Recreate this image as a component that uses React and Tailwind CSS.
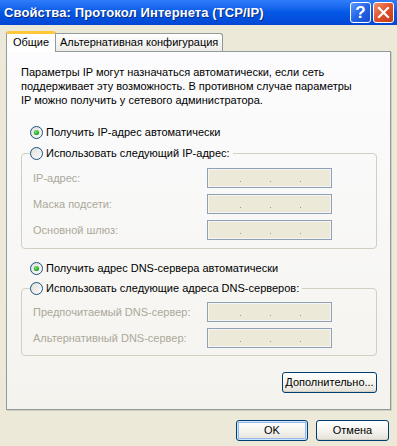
import React from 'react';

const font = { fontFamily: '"Liberation Sans", Arial, sans-serif' };

function Radio({ checked }) {
  return (
    <svg width="13" height="13" viewBox="0 0 13 13" className="shrink-0">
      <defs>
        <linearGradient id="rbg" x1="0" y1="0" x2="1" y2="1">
          <stop offset="0" stopColor="#dcdcd7" />
          <stop offset="1" stopColor="#ffffff" />
        </linearGradient>
        <radialGradient id="rdot" cx="0.4" cy="0.35" r="0.7">
          <stop offset="0" stopColor="#6fe16f" />
          <stop offset="1" stopColor="#1e9a1e" />
        </radialGradient>
      </defs>
      <circle cx="6.5" cy="6.5" r="6" fill="url(#rbg)" stroke="#1c5180" strokeWidth="1" />
      {checked && <circle cx="6.5" cy="6.5" r="2.6" fill="url(#rdot)" />}
    </svg>
  );
}

function RadioRow({ checked, label }) {
  return (
    <div className="flex items-center h-[16px] gap-[3px]">
      <Radio checked={checked} />
      <span className="text-[11px] text-black whitespace-nowrap pr-[3px]">{label}</span>
    </div>
  );
}

function IpBox() {
  return (
    <div className="w-[125px] h-[20px] border border-[#8ea1b8] bg-[#ece9d8] shadow-[inset_0_0_0_1px_#f6f5f0] flex items-end pb-[5px] pl-[32px] gap-[29px]">
      <span className="w-[1px] h-[1px] bg-[#9a9a9a]" />
      <span className="w-[1px] h-[1px] bg-[#9a9a9a]" />
      <span className="w-[1px] h-[1px] bg-[#9a9a9a]" />
    </div>
  );
}

function FieldRow({ label }) {
  return (
    <div className="flex items-center h-[20px]">
      <span className="w-[174px] text-[11px] text-[#aca899] whitespace-nowrap">{label}</span>
      <IpBox />
    </div>
  );
}

function XpButton({ children, width, focused }) {
  return (
    <div
      className={`h-[21px] ${width} rounded-[3px] border border-[#003c74] bg-gradient-to-b from-white via-[#f5f4ef] to-[#e3e1d8] flex items-center justify-center text-[11px] text-black ${
        focused ? 'shadow-[inset_0_0_0_1px_#cee7ff,inset_0_0_0_2px_#98b8ea]' : 'shadow-[inset_0_-1px_0_#d6d0c5]'
      }`}
    >
      {children}
    </div>
  );
}

export default function App() {
  return (
    <div className="w-[397px] h-[446px] bg-[#ece9d8] flex flex-col overflow-hidden" style={font}>
      {/* title bar */}
      <div className="h-[25px] flex items-center pl-[4px] pr-[3px] bg-gradient-to-b from-[#2f7dfa] via-[#0458e6] to-[#0347d4]">
        <span className="flex-1 text-[13px] font-bold text-white tracking-[0.1px] [text-shadow:1px_1px_0_#0a2a80]">
          Свойства: Протокол Интернета (TCP/IP)
        </span>
        <div className="flex gap-[2px]">
          <div className="w-[21px] h-[21px] rounded-[3px] border border-white bg-gradient-to-br from-[#5e9bff] via-[#2463e6] to-[#1a4fd0] flex items-center justify-center text-white font-bold text-[17px] leading-none">
            ?
          </div>
          <div className="w-[21px] h-[21px] rounded-[3px] border border-white bg-gradient-to-br from-[#f09070] via-[#e0502b] to-[#c53a12] flex items-center justify-center">
            <svg width="13" height="13" viewBox="0 0 13 13">
              <path d="M2 2 L11 11 M11 2 L2 11" stroke="white" strokeWidth="2.2" strokeLinecap="square" />
            </svg>
          </div>
        </div>
      </div>

      {/* tabs + panel */}
      <div className="pl-[6px] pr-[6px] pt-[5px]">
        <div className="flex items-end h-[21px] relative z-10">
          <div className="h-[21px] w-[50px] bg-white border border-[#919b9c] border-b-0 border-t-[3px] border-t-[#ffc83c] rounded-t-[3px] flex items-center justify-center text-[11px] text-black -mb-[1px] pb-[1px]">
            Общие
          </div>
          <div className="h-[18px] px-[4px] bg-gradient-to-b from-white to-[#ecebe6] border border-[#919b9c] border-l-0 border-b-0 rounded-tr-[3px] flex items-center text-[11px] text-black whitespace-nowrap">
            Альтернативная конфигурация
          </div>
        </div>
        <div className="h-[359px] w-[385px] border border-[#919b9c] shadow-[1px_1px_0_#d0cebf] bg-gradient-to-b from-[#fcfcfe] to-[#f4f3ee] pl-[14px] pr-[13px] flex flex-col">
          <p className="mt-[13px] text-[11px] leading-[14px] text-black whitespace-nowrap">
            Параметры IP могут назначаться автоматически, если сеть
            <br />
            поддерживает эту возможность. В противном случае параметры
            <br />
            IP можно получить у сетевого администратора.
          </p>

          <div className="mt-[17px] pl-[9px]">
            <RadioRow checked label="Получить IP-адрес автоматически" />
          </div>

          <fieldset className="mt-[5px] border border-[#d0d0bf] rounded-[4px] pb-[8px]">
            <legend className="ml-[8px]">
              <RadioRow label="Использовать следующий IP-адрес:" />
            </legend>
            <div className="pl-[11px] pt-[7px] flex flex-col gap-[6px]">
              <FieldRow label="IP-адрес:" />
              <FieldRow label="Маска подсети:" />
              <FieldRow label="Основной шлюз:" />
            </div>
          </fieldset>

          <div className="mt-[11px] pl-[9px]">
            <RadioRow checked label="Получить адрес DNS-сервера автоматически" />
          </div>

          <fieldset className="mt-[4px] border border-[#d0d0bf] rounded-[4px] pb-[7px]">
            <legend className="ml-[8px]">
              <RadioRow label="Использовать следующие адреса DNS-серверов:" />
            </legend>
            <div className="pl-[11px] pt-[6px] flex flex-col gap-[6px]">
              <FieldRow label="Предпочитаемый DNS-сервер:" />
              <FieldRow label="Альтернативный DNS-сервер:" />
            </div>
          </fieldset>

          <div className="mt-[16px] flex justify-end">
            <XpButton width="w-[95px]">Дополнительно...</XpButton>
          </div>
        </div>
      </div>

      {/* dialog buttons */}
      <div className="flex justify-end gap-[8px] pr-[8px] mt-[10px]">
        <XpButton width="w-[72px]" focused>
          OK
        </XpButton>
        <XpButton width="w-[73px]">Отмена</XpButton>
      </div>
    </div>
  );
}
